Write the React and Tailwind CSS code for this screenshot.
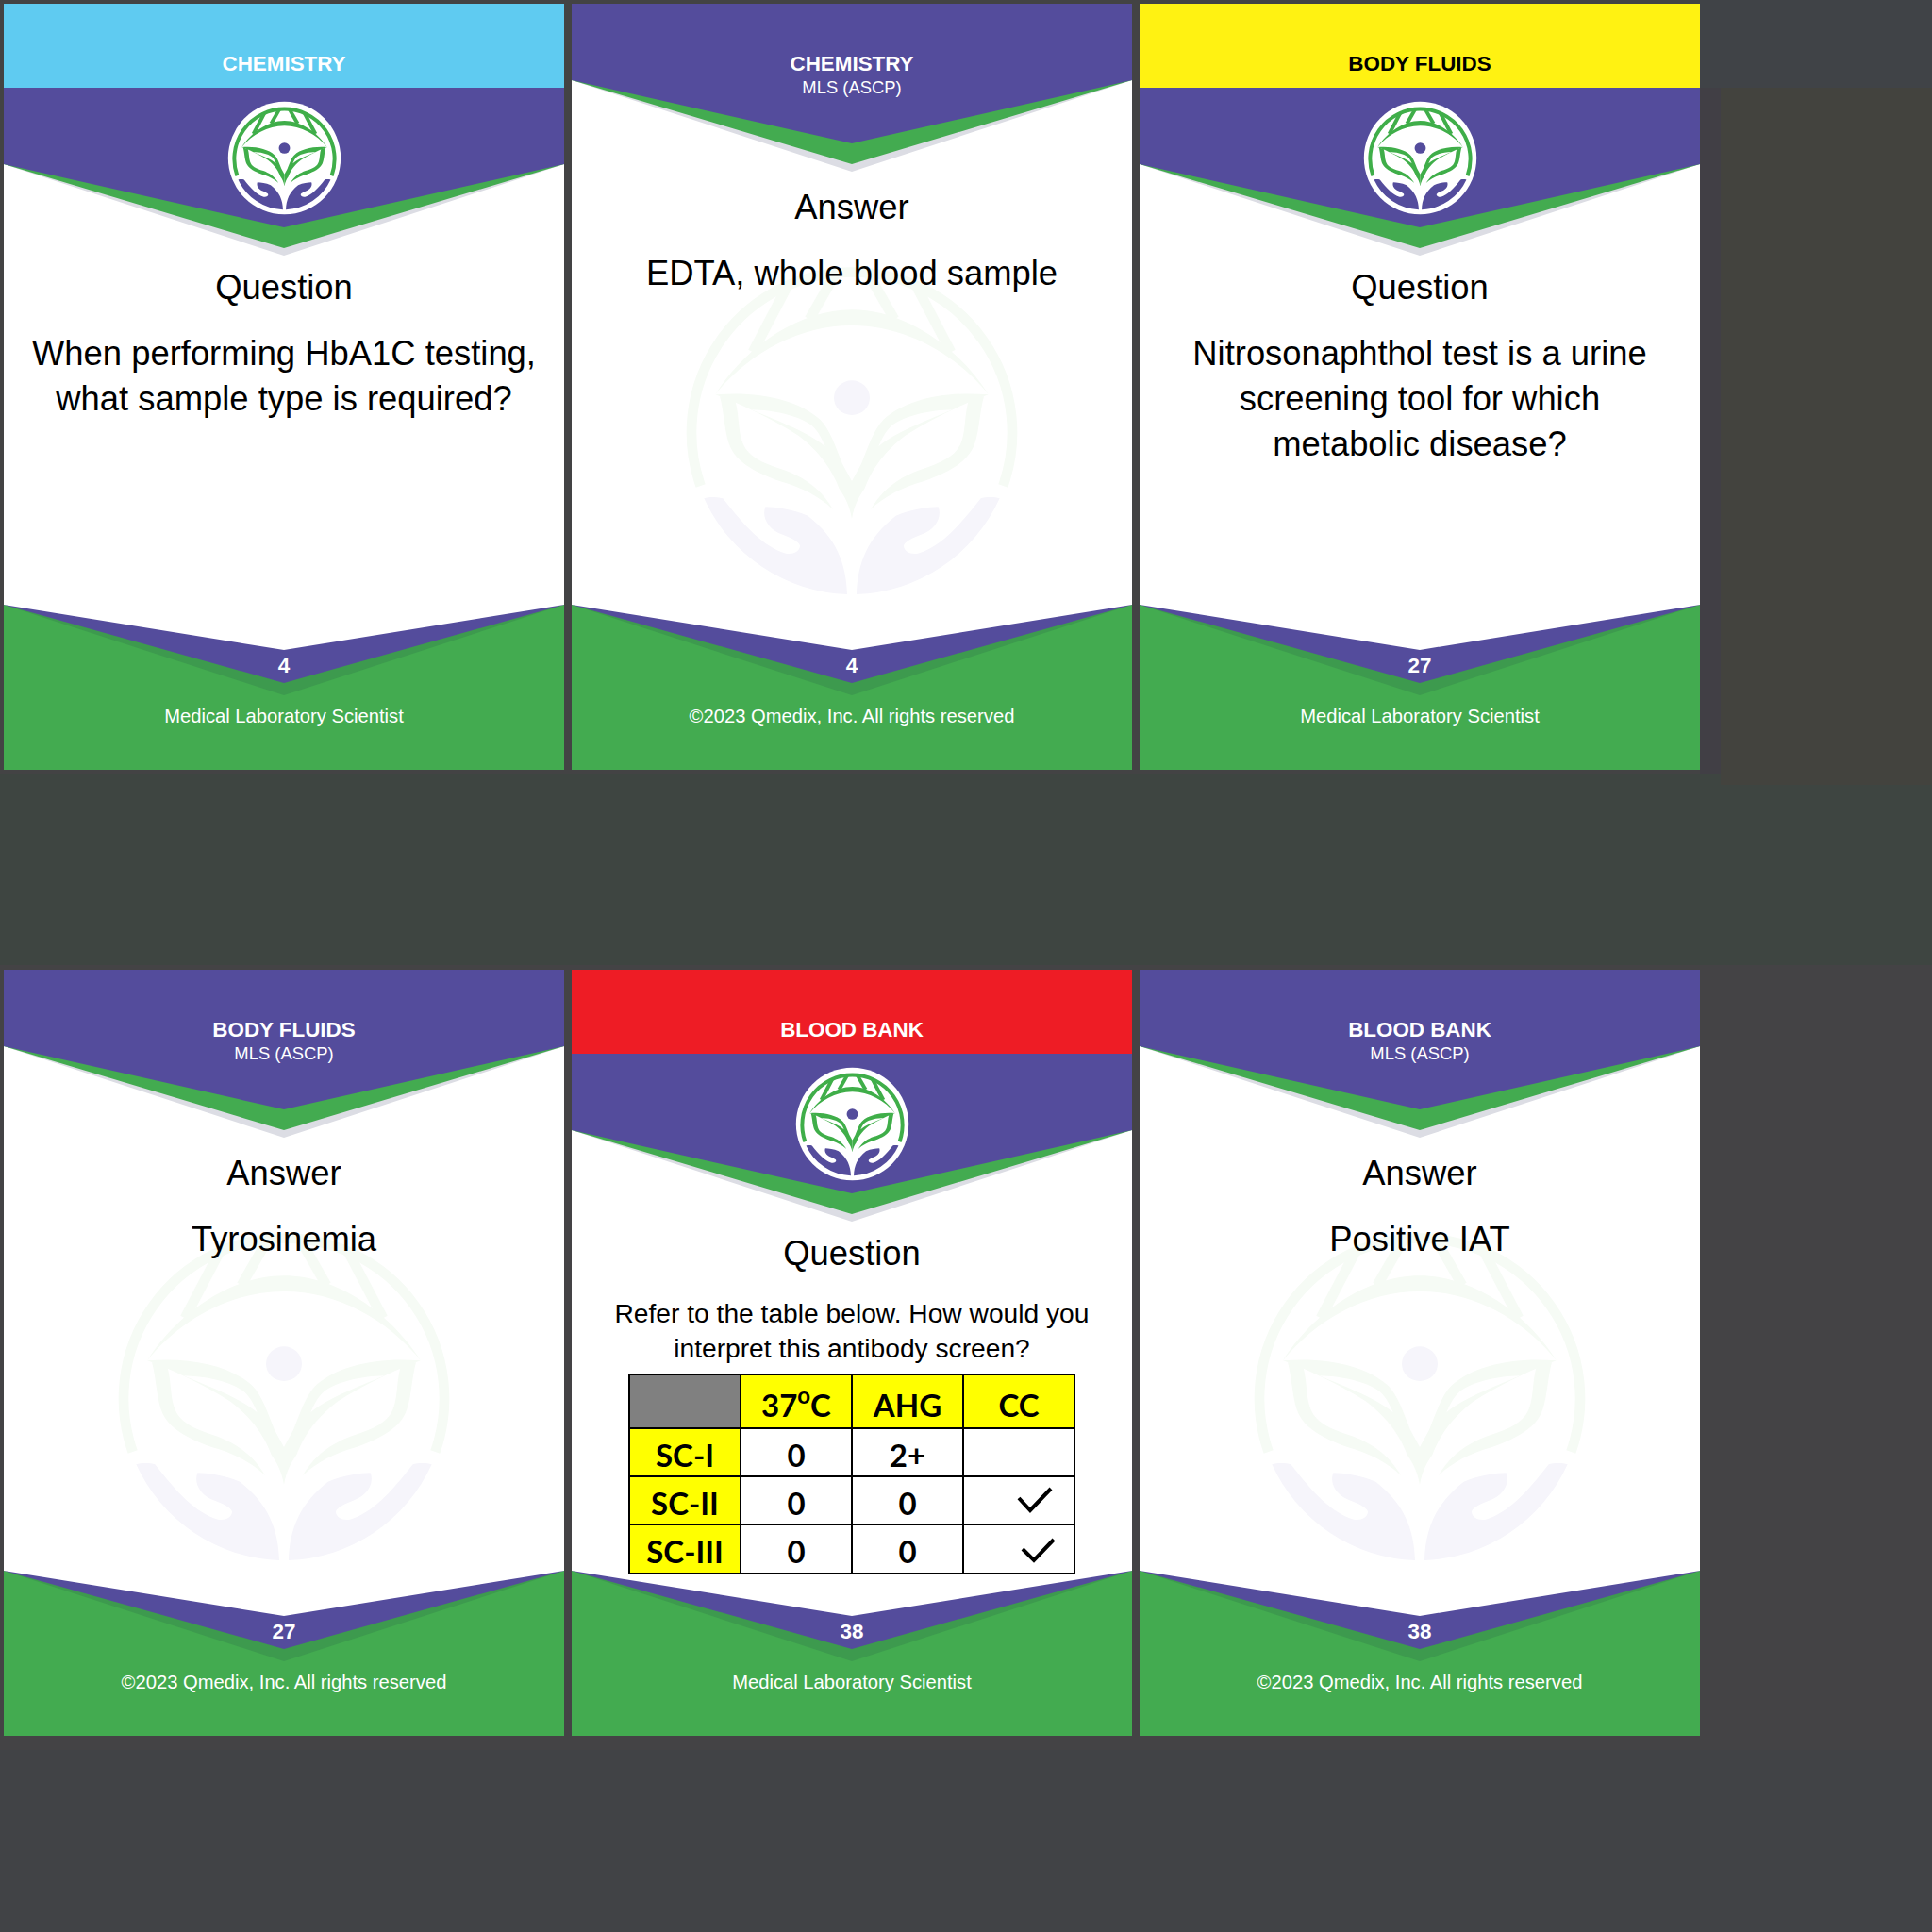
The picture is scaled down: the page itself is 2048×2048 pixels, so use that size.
const PURPLE = "#544c9c";
const GREEN = "#43ab50";

function LeafHalf({ green }) {
  return (
    <g>
      <path
        fill={green}
        d="M-435 -110 C-300 -122 -170 -95 -100 -30 C-70 0 -50 60 -30 110 L0 165 L0 285 C-8 240 -25 210 -40 190 C-55 150 -85 85 -170 20 C-250 -30 -330 -70 -420 -105 Z"
      />
      <path
        fill={green}
        d="M-420 -105 L-372 -92 C-358 -50 -362 0 -350 35 C-335 85 -290 105 -215 130 C-160 150 -100 185 -60 255 C-100 215 -170 180 -230 165 C-300 140 -360 110 -385 60 C-405 20 -405 -50 -420 -105 Z"
      />
      <path
        fill="#fff"
        d="M-320 -62 C-250 -60 -170 -45 -125 -10 C-105 10 -95 30 -85 55 C-130 15 -230 -25 -320 -62 Z"
      />
    </g>
  );
}

function Hand({ purple }) {
  return (
    <path
      fill={purple}
      d="M-470 220 A520 520 0 0 0 -15 525 C-18 425 -50 345 -140 275 C-190 255 -240 247 -275 247 C-288 280 -265 320 -220 335 C-195 345 -170 355 -165 370 C-165 390 -190 400 -210 395 C-280 375 -340 310 -410 220 C-425 215 -455 215 -470 220 Z"
    />
  );
}

function Logo({ green, purple, disc, ring, className }) {
  return (
    <svg viewBox="-600 -600 1200 1200" className={className}>
      {disc && <circle r="573" fill="#fff" />}
      <path d="M-481 180 A510 510 0 1 1 481 180" fill="none" stroke={green} strokeWidth={ring} />
      <path
        fill={green}
        d="M-435 -110 C-340 -260 -170 -380 0 -380 C170 -380 340 -260 435 -110 C330 -240 170 -330 0 -330 C-170 -330 -330 -240 -435 -110 Z"
      />
      <g fill="none" stroke={green} strokeWidth={ring}>
        <path d="M-315 -245 L-205 -455" />
        <path d="M315 -245 L205 -455" />
        <path d="M-135 -350 L-50 -498" />
        <path d="M135 -350 L50 -498" />
      </g>
      <LeafHalf green={green} />
      <g transform="scale(-1,1)">
        <LeafHalf green={green} />
      </g>
      <ellipse cx="0" cy="-100" rx="57" ry="55" fill={purple} />
      <Hand purple={purple} />
      <g transform="scale(-1,1)">
        <Hand purple={purple} />
      </g>
    </svg>
  );
}

function Chevron() {
  return (
    <svg viewBox="0 0 594 178" className="absolute inset-0 h-[178px] w-[594px]">
      <polygon points="0,81 297,178 594,81" fill="#dcdde4" />
      <polygon points="0,81 297,170 594,81" fill={GREEN} />
      <polygon points="0,0 594,0 594,81 297,148 0,81" fill={PURPLE} />
    </svg>
  );
}

function Footer({ num, text }) {
  return (
    <div className="relative mt-auto h-[175px] w-[594px] shrink-0">
      <svg viewBox="0 0 594 175" className="absolute inset-0 h-[175px] w-[594px]">
        <rect width="594" height="175" fill={GREEN} />
        <polygon points="0,0 297,96 594,0" fill="#3d9a4e" />
        <polygon points="0,0 297,83 594,0" fill={PURPLE} />
        <polygon points="0,0 297,48 594,0" fill="#fff" />
      </svg>
      <div className="relative flex flex-col items-center pt-[52px] text-white">
        <div className="h-[26px] text-[22.4px] leading-[26px] font-bold">{num}</div>
        <div className="mt-[27px] h-[26px] text-[20.2px] leading-[26px]">{text}</div>
      </div>
    </div>
  );
}

function QuestionCard({ stripe, stripeText, title, num, children }) {
  return (
    <div className="relative flex h-[812px] w-[594px] shrink-0 flex-col bg-white text-center text-black">
      <div className={`flex h-[89px] shrink-0 items-end justify-center pb-[12px] text-[22.4px] leading-[26px] font-bold ${stripe} ${stripeText}`}>
        {title}
      </div>
      <div className="relative h-[178px] w-[594px] shrink-0">
        <Chevron />
        <Logo green="#3fae49" purple={PURPLE} disc ring="38" className="absolute top-[12px] left-[234.5px] h-[125px] w-[125px]" />
      </div>
      <div className="pt-[10px] text-[36.4px] leading-[48px]">Question</div>
      {children}
      <Footer num={num} text="Medical Laboratory Scientist" />
    </div>
  );
}

function AnswerCard({ title, num, answer }) {
  return (
    <div className="relative flex h-[812px] w-[594px] shrink-0 flex-col bg-white text-center text-black">
      <Logo green="#f6fbf5" purple="#f6f5fb" ring="32" className="absolute top-[251px] left-[97px] h-[400px] w-[400px]" />
      <div className="relative h-[178px] w-[594px] shrink-0 text-white">
        <Chevron />
        <div className="relative flex flex-col items-center pt-[51px]">
          <div className="h-[26px] text-[22.4px] leading-[26px] font-bold">{title}</div>
          <div className="h-[24px] text-[18.4px] leading-[24px]">MLS (ASCP)</div>
        </div>
      </div>
      <div className="relative pt-[14px] text-[36.4px] leading-[48px]">Answer</div>
      <div className="relative mt-[22px] text-[36.4px] leading-[48px]">{answer}</div>
      <Footer num={num} text="©2023 Qmedix, Inc. All rights reserved" />
    </div>
  );
}

function Body({ lines }) {
  return (
    <div className="mt-[22px] text-[36.4px] leading-[48px]">
      {lines.map((l) => (
        <div key={l}>{l}</div>
      ))}
    </div>
  );
}

function Check({ pts }) {
  return (
    <svg viewBox="0 0 118 46" className="block h-[46px] w-[118px] overflow-visible">
      <polyline points={pts} fill="none" stroke="#000" strokeWidth="4" />
    </svg>
  );
}

function Cell({ y, g, h, pt = "pt-[5px]", children }) {
  const bg = y ? "bg-[#ffff00]" : g ? "bg-[#808080]" : "bg-white";
  return (
    <td className={`w-[118px] border-2 border-black p-0 text-center align-middle ${pt} ${bg} ${h}`}>{children}</td>
  );
}

function CheckCell({ h, pts }) {
  return (
    <td className={`w-[118px] overflow-hidden border-2 border-black bg-white p-0 align-top ${h}`}>
      <Check pts={pts} />
    </td>
  );
}

function AbTable() {
  const font = { fontFamily: 'Lato, "Liberation Sans", sans-serif' };
  return (
    <table className="relative z-10 mx-auto -mb-[6px] mt-[8px] w-[472px] table-fixed border-collapse text-[33px] leading-none font-bold" style={font}>
      <tbody>
        <tr>
          <Cell g h="h-[57px]" />
          <Cell y h="h-[57px]" pt="pt-[8px]">
            37<sup className="-top-[14px] text-[24px]">o</sup>C
          </Cell>
          <Cell y h="h-[57px]" pt="pt-[8px]">AHG</Cell>
          <Cell y h="h-[57px]" pt="pt-[8px]">CC</Cell>
        </tr>
        <tr>
          <Cell y h="h-[51px]">SC-I</Cell>
          <Cell h="h-[51px]">0</Cell>
          <Cell h="h-[51px]">2+</Cell>
          <Cell h="h-[51px]" />
        </tr>
        <tr>
          <Cell y h="h-[51px]">SC-II</Cell>
          <Cell h="h-[51px]">0</Cell>
          <Cell h="h-[51px]">0</Cell>
          <CheckCell h="h-[51px]" pts="58,22 70,35 92,12" />
        </tr>
        <tr>
          <Cell y h="h-[52px]">SC-III</Cell>
          <Cell h="h-[52px]">0</Cell>
          <Cell h="h-[52px]">0</Cell>
          <CheckCell h="h-[52px]" pts="62,25 74,37 95,15" />
        </tr>
      </tbody>
    </table>
  );
}

export default function App() {
  return (
    <div
      className="flex h-[2048px] w-[2048px] flex-col overflow-hidden bg-[#414346]"
      style={{ fontFamily: '"Liberation Sans", Arial, sans-serif' }}
    >
      <div className="flex h-[820px] shrink-0 bg-[#434344]">
        <div className="flex gap-2 pt-1 pl-1">
          <QuestionCard stripe="bg-[#5fcbf1]" stripeText="text-white" title="CHEMISTRY" num="4">
            <Body lines={["When performing HbA1C testing,", "what sample type is required?"]} />
          </QuestionCard>
          <AnswerCard title="CHEMISTRY" num="4" answer="EDTA, whole blood sample" />
          <QuestionCard stripe="bg-[#fff212]" stripeText="text-black" title="BODY FLUIDS" num="27">
            <Body lines={["Nitrosonaphthol test is a urine", "screening tool for which", "metabolic disease?"]} />
          </QuestionCard>
        </div>
        <div className="relative z-10 flex h-[832px] flex-1 flex-col">
          <div className="h-[93px] shrink-0 bg-[#404347]" />
          <div className="flex flex-1">
            <div className="h-[727px] w-[22px] bg-[#413f45]" />
            <div className="flex-1 bg-[#43433e]" />
          </div>
        </div>
      </div>
      <div className="h-[203px] shrink-0 bg-[#3e4541]" />
      <div className="flex h-[832px] shrink-0 gap-2 bg-[#444345] pt-[5px] pl-1">
        <AnswerCard title="BODY FLUIDS" num="27" answer="Tyrosinemia" />
        <QuestionCard stripe="bg-[#ee1c25]" stripeText="text-white" title="BLOOD BANK" num="38">
          <div className="mt-[21px] text-[28.2px] leading-[37px]">
            <div>Refer to the table below. How would you</div>
            <div>interpret this antibody screen?</div>
          </div>
          <AbTable />
        </QuestionCard>
        <AnswerCard title="BLOOD BANK" num="38" answer="Positive IAT" />
      </div>
    </div>
  );
}
